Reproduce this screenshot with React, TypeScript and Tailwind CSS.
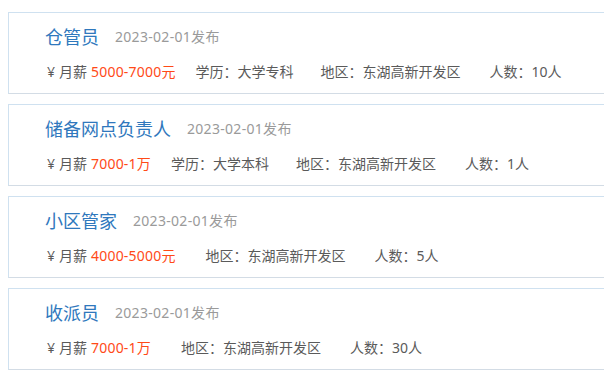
type Job = {
  title: string;
  date: string;
  salary: string;
  education?: string;
  area: string;
  count: string;
};

const jobs: Job[] = [
  { title: "仓管员", date: "2023-02-01发布", salary: "5000-7000元", education: "大学专科", area: "东湖高新开发区", count: "10人" },
  { title: "储备网点负责人", date: "2023-02-01发布", salary: "7000-1万", education: "大学本科", area: "东湖高新开发区", count: "1人" },
  { title: "小区管家", date: "2023-02-01发布", salary: "4000-5000元", area: "东湖高新开发区", count: "5人" },
  { title: "收派员", date: "2023-02-01发布", salary: "7000-1万", area: "东湖高新开发区", count: "30人" },
];

function JobCard({ job }: { job: Job }) {
  return (
    <div className="w-[620px] h-[82px] shrink-0 border border-[#cfe1f0] border-b-[#d3dce5] bg-white pl-[36px] pt-[12px]">
      <div className="flex items-center h-6">
        <span className="text-[18px] leading-6 text-[#2f78bd]">{job.title}</span>
        <span className="ml-4 text-[14px] leading-6 tracking-[0.3px] text-[#9a9a9a]">{job.date}</span>
      </div>
      <div className="mt-[13px] flex items-center h-5 text-[14px] leading-5 text-[#5a5a5a]">
        <span className="ml-[2px] flex items-center">
          <span className="mr-[4px]">¥</span>月薪
          <span className="ml-[4px] tracking-[0.2px] text-[#ff4a17]">{job.salary}</span>
        </span>
        {job.education && <span className="ml-5">学历：{job.education}</span>}
        <span className={job.education ? "ml-[27px]" : "ml-[30px]"}>地区：{job.area}</span>
        <span className="ml-[29px]">人数：{job.count}</span>
      </div>
    </div>
  );
}

export default function App() {
  return (
    <div
      className="w-[604px] h-[384px] overflow-hidden bg-white pl-2 pt-3 flex flex-col gap-[10px]"
      style={{ fontFamily: '"Noto Sans", "Noto Sans CJK SC", sans-serif' }}
    >
      {jobs.map((job) => (
        <JobCard key={job.title} job={job} />
      ))}
    </div>
  );
}
